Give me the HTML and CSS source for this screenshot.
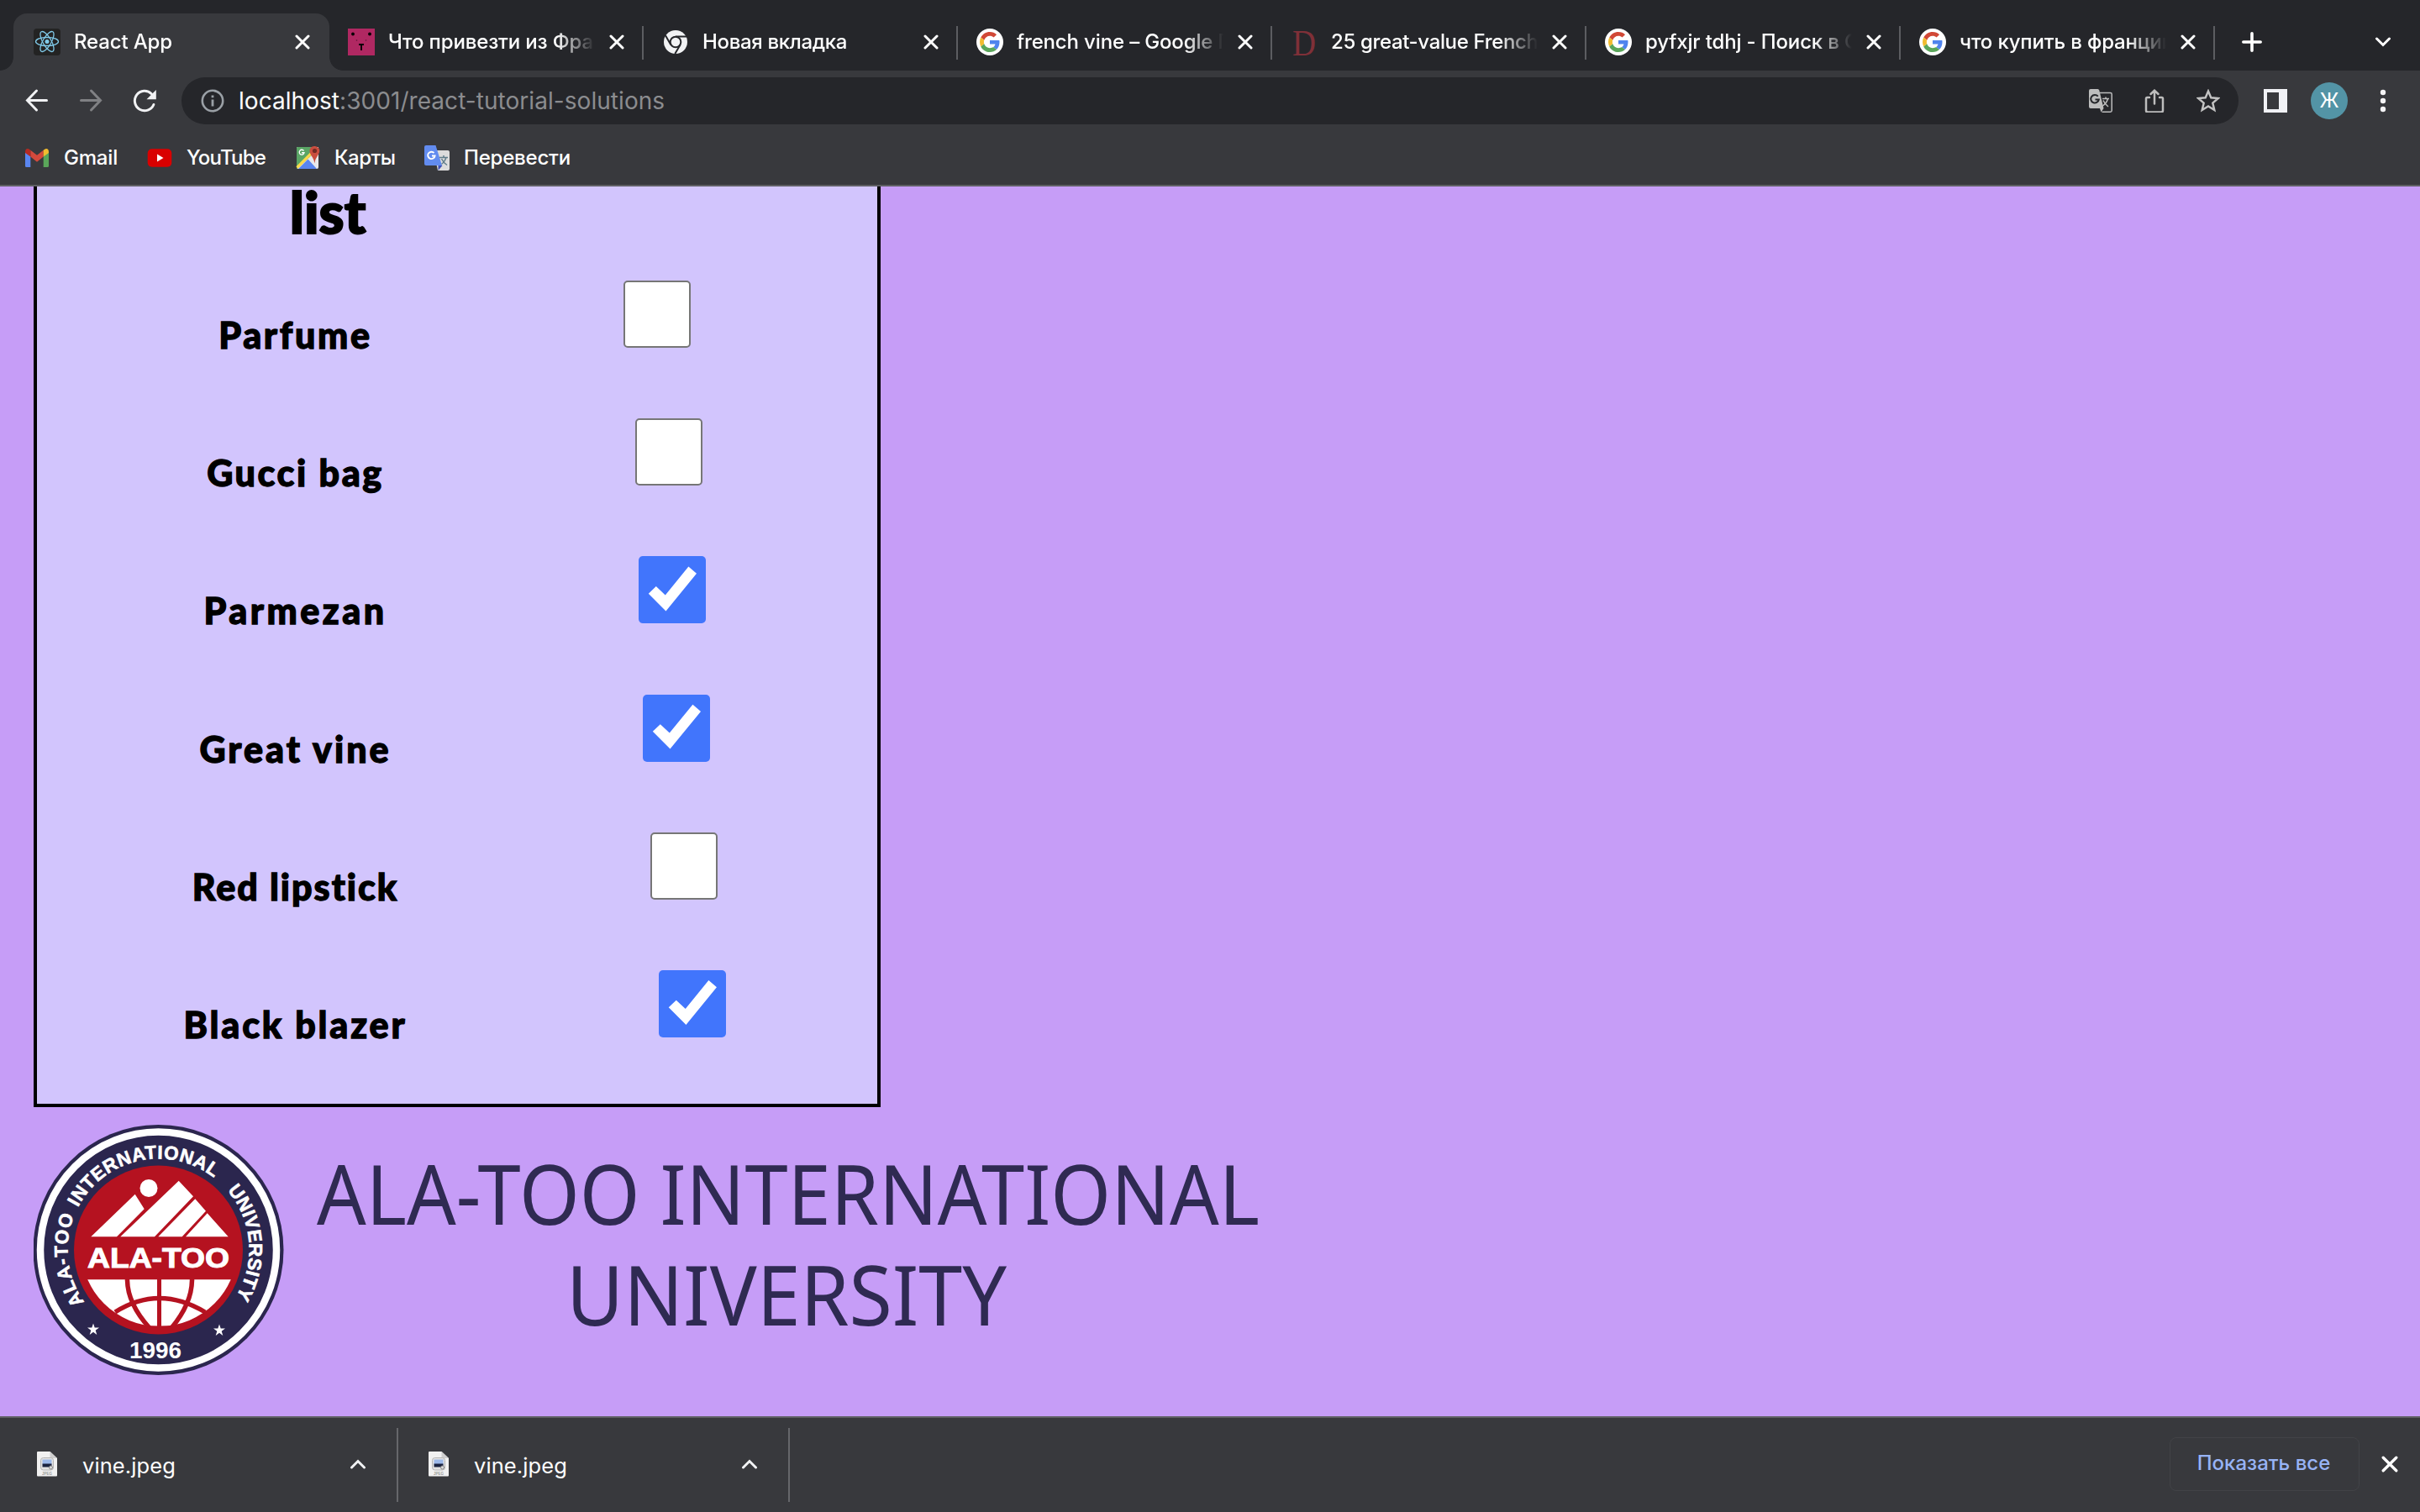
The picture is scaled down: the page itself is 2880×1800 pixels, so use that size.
FILE: index.html
```html
<!DOCTYPE html>
<html lang="ru">
<head>
<meta charset="utf-8">
<title>React App</title>
<link rel="stylesheet" href="styles.css">
</head>
<body>
<svg class="defs" width="0" height="0" aria-hidden="true">
  <symbol id="close" viewBox="0 0 18 18"><path d="M2 2 16 16M16 2 2 16" fill="none" stroke="currentColor" stroke-width="3" stroke-linecap="round"/></symbol>
  <symbol id="google" viewBox="0 0 32 32">
    <circle cx="16" cy="16" r="16" fill="#fff"/>
    <g transform="translate(4 4) scale(.5)">
      <path fill="#d14836" d="M24 9.5c3.54 0 6.71 1.22 9.21 3.6l6.85-6.85C35.9 2.38 30.47 0 24 0 14.62 0 6.51 5.38 2.56 13.22l7.98 6.19C12.43 13.72 17.74 9.5 24 9.5z"/>
      <path fill="#5084ee" d="M46.98 24.55c0-1.57-.15-3.09-.38-4.55H24v9.02h12.94c-.58 2.96-2.26 5.48-4.78 7.18l7.73 6c4.51-4.18 7.09-10.36 7.09-17.65z"/>
      <path fill="#f2bc2f" d="M10.53 28.59c-.48-1.45-.76-2.99-.76-4.59s.27-3.14.76-4.59l-7.98-6.19C.92 16.46 0 20.12 0 24c0 3.88.92 7.54 2.56 10.78l7.97-6.19z"/>
      <path fill="#5aa65a" d="M24 48c6.48 0 11.93-2.13 15.89-5.81l-7.73-6c-2.15 1.45-4.92 2.3-8.16 2.3-6.26 0-11.57-4.22-13.47-9.91l-7.98 6.19C6.51 42.62 14.62 48 24 48z"/>
    </g>
  </symbol>
  <symbol id="jpeg" viewBox="0 0 24 30">
    <path d="M1 0H15.500L24 8V28.500Q24 29.500 23 29.500H1Q0 29.500 0 28.500V1Q0 0 1 0Z" fill="#f1f1f1"/>
    <path d="M15.500 0 24 8H17Q15.500 8 15.500 6.500Z" fill="#cfcfcf"/>
    <rect x="4.500" y="7.500" width="15" height="14.500" rx="3" fill="#e3e3e3" stroke="#b5b5b5" stroke-width="1"/>
    <rect x="6.500" y="9.500" width="11" height="6" fill="#9db9ea"/>
    <path d="M6.500 14.500H17.500V18.500H6.500Z" fill="#1a2340"/>
    <circle cx="16.500" cy="19" r="2" fill="#ddd" stroke="#888"/>
    <text x="12" y="27.500" text-anchor="middle" class="jpeg-tag">JPEG</text>
  </symbol>
</svg>

<header class="browser">
  <div class="tabs">
    <div class="tab tab-active">
      <svg class="favicon" viewBox="0 0 32 32"><rect width="32" height="32" rx="4" fill="#232323"/><g fill="none" stroke="#80cbea" stroke-width="1.300"><ellipse cx="16" cy="15.500" rx="13.500" ry="5"/><ellipse cx="16" cy="15.500" rx="13.500" ry="5" transform="rotate(60 16 15.500)"/><ellipse cx="16" cy="15.500" rx="13.500" ry="5" transform="rotate(120 16 15.500)"/></g><circle cx="16" cy="15.500" r="2.500" fill="#80cbea"/></svg>
      <span class="tab-title">React App</span>
      <svg class="tab-close"><use href="#close"/></svg>
    </div>
    <div class="tab">
      <svg class="favicon" viewBox="0 0 32 32"><rect width="32" height="32" fill="#b02862"/><circle cx="6" cy="6.500" r="1.900"/><circle cx="26" cy="6.500" r="1.900"/><circle cx="10.500" cy="14" r=".8" fill="#5c1635"/><circle cx="21.500" cy="14" r=".8" fill="#5c1635"/><path d="M13 19H19M16 19V26" stroke="#000" stroke-width="1.800"/></svg>
      <span class="tab-title">Что привезти из Фра</span>
      <svg class="tab-close"><use href="#close"/></svg>
    </div>
    <div class="tab tab-line">
      <svg class="favicon" viewBox="0 0 32 32"><circle cx="16" cy="16" r="14" fill="#f1f2f4"/><circle cx="16" cy="16" r="6.300" fill="none" stroke="#25262a" stroke-width="2"/><path d="M16 9.500H29M10.300 19.200 4 8.200M21.600 19.200 15.300 30" stroke="#25262a" stroke-width="2" fill="none"/></svg>
      <span class="tab-title tight">Новая вкладка</span>
      <svg class="tab-close"><use href="#close"/></svg>
    </div>
    <div class="tab tab-line">
      <svg class="favicon"><use href="#google"/></svg>
      <span class="tab-title">french vine – Google П</span>
      <svg class="tab-close"><use href="#close"/></svg>
    </div>
    <div class="tab tab-line">
      <svg class="favicon" viewBox="0 0 32 32"><text x="2" y="31.500" class="letter-d" textLength="28" lengthAdjust="spacingAndGlyphs">D</text></svg>
      <span class="tab-title tight">25 great-value French</span>
      <svg class="tab-close"><use href="#close"/></svg>
    </div>
    <div class="tab tab-line">
      <svg class="favicon"><use href="#google"/></svg>
      <span class="tab-title">pyfxjr tdhj - Поиск в G</span>
      <svg class="tab-close"><use href="#close"/></svg>
    </div>
    <div class="tab tab-line tab-last">
      <svg class="favicon"><use href="#google"/></svg>
      <span class="tab-title">что купить в франции</span>
      <svg class="tab-close"><use href="#close"/></svg>
    </div>
    <svg class="new-tab" viewBox="0 0 24 24"><path d="M12 1.800V22.200M1.800 12H22.200" stroke="#fff" stroke-width="3.600" stroke-linecap="round"/></svg>
    <svg class="tab-menu" viewBox="0 0 20 12"><path d="M2.500 2 10 9.500 17.500 2" fill="none" stroke="#fff" stroke-width="3" stroke-linecap="round"/></svg>
  </div>

  <div class="toolbar">
    <svg class="nav-icon" viewBox="0 0 32 32"><path d="M27.500 15.500H5M15.500 4 4.500 15.500 15.500 27" fill="none" stroke="#f1f2f4" stroke-width="3" stroke-linecap="round"/></svg>
    <svg class="nav-icon" viewBox="0 0 32 32"><path d="M4.500 15.500H27M16.500 4 27.500 15.500 16.500 27" fill="none" stroke="#808184" stroke-width="3" stroke-linecap="round"/></svg>
    <svg class="nav-icon" viewBox="0 0 32 32"><path d="M26.900 20.500A11.700 11.700 0 1 1 24.300 7.700" fill="none" stroke="#f1f2f4" stroke-width="3" stroke-linecap="round"/><path d="M29.800 3V14.300H18.500Z" fill="#f1f2f4"/></svg>
    <div class="omnibox">
      <svg class="info" viewBox="0 0 28 28"><circle cx="14" cy="14" r="12.200" fill="none" stroke="#9aa0a6" stroke-width="2.600"/><path d="M14 12.500V20.500M14 7.500V10.300" stroke="#9aa0a6" stroke-width="2.800"/></svg>
      <span class="url">localhost<span class="url-path">:3001/react-tutorial-solutions</span></span>
      <div class="omni-icons">
        <svg class="omni-icon" viewBox="0 0 28 28"><path d="M13 4.500H25.500Q27.200 4.500 27.200 6.200V25.500Q27.200 27.200 25.500 27.200H15.500" fill="none" stroke="#bdbdbd" stroke-width="1.500"/><path d="M2 0H10.500Q11.800 0 12.300 1.500L17.500 23 14.500 27.500 13 23H2Q0 23 0 21V2Q0 0 2 0Z" fill="#bdbdbd"/><path d="M10.800 8.700A4.800 4.800 0 1 0 11.800 12.500H7.500" fill="none" stroke="#25262a" stroke-width="2"/><path d="M16 11.500H24M20 9.500V11.500M22.500 11.500Q21 17 15.800 20.500M17 13.500Q19 18 23 21" fill="none" stroke="#bdbdbd" stroke-width="1.500"/></svg>
        <svg class="omni-icon" viewBox="0 0 28 28"><path d="M8 10H5.500Q4 10 4 11.500V25.500Q4 27.500 6 27.500H22Q24 27.500 24 25.500V11.500Q24 10 22.500 10H20M14 17.500V2.500M9.500 6 14 1.700 18.500 6" fill="none" stroke="#bdbdbd" stroke-width="2.500" stroke-linecap="round"/></svg>
        <svg class="omni-icon" viewBox="0 0 28 28"><path d="M14 2.500 17.300 10.300 25.800 11 19.300 16.600 21.300 25 14 20.500 6.700 25 8.700 16.600 2.200 11 10.700 10.300Z" fill="none" stroke="#c4c4c4" stroke-width="2.400"/></svg>
      </div>
    </div>
    <svg class="side-panel" viewBox="0 0 28 28"><path fill-rule="evenodd" fill="#f1f2f6" d="M0 0H28V28H0ZM4 4V24H18V4Z"/></svg>
    <span class="avatar">Ж</span>
    <svg class="kebab" viewBox="0 0 8 28"><g fill="#f4f4f6"><circle cx="4" cy="4" r="3.200"/><circle cx="4" cy="14" r="3.200"/><circle cx="4" cy="24" r="3.200"/></g></svg>
  </div>

  <nav class="bookmarks">
    <a class="bookmark bm-gmail"><svg viewBox="0 0 32 32"><path d="M2 9V25.500Q2 27 3.500 27H8.300V14Z" fill="#5a86f0"/><path d="M30 9V25.500Q30 27 28.500 27H23.700V14Z" fill="#5aa65a"/><path d="M8.300 6.800 16 12.800 23.700 6.800V14.500L16 20.700 8.300 14.500Z" fill="#d4493c"/><path d="M2 9Q2 5 5 5 6.300 5 8.300 6.800V14.500L2 10Z" fill="#b52a22"/><path d="M30 9Q30 5 27 5 25.700 5 23.700 6.800V14.500L30 10Z" fill="#f2bc2f"/></svg>Gmail</a>
    <a class="bookmark bm-youtube"><svg viewBox="0 0 32 32"><rect x="1.700" y="5.300" width="28.600" height="21.500" rx="5" fill="#d90000"/><path d="M13 11.500V20.500L20.500 16Z" fill="#fff"/></svg>YouTube</a>
    <a class="bookmark bm-maps"><svg viewBox="0 0 32 32"><path d="M4 3H29V27Q29 29 27 29H5Q3 29 3 27V4Q3 3 4 3Z" fill="#e8e8ea"/><path d="M4 3H22L24 10 3 29V4Q3 3 4 3Z" fill="#5aa565"/><path d="M5 29 16.500 17.500 27 29Z" fill="#5a86f0"/><path d="M3.500 27.500 21 10" stroke="#fbd94b" stroke-width="3.200"/><path d="M24.300 22.500Q24 18 20 12.500 17.500 8 19 5A6.200 6.200 0 0 1 30.200 6Q31 9 28.500 12.500 25 17.500 24.300 22.500Z" fill="#c94d3f"/><circle cx="24.500" cy="7.500" r="2.600" fill="#712a24"/><path d="M11.500 7.500A2.900 2.900 0 1 0 12 9.700H9" fill="none" stroke="#fff" stroke-width="1.400"/></svg>Карты</a>
    <a class="bookmark bm-translate"><svg viewBox="0 0 32 32"><path d="M12 7H29Q31 7 31 9V29Q31 31 29 31H17Z" fill="#dcdcdc"/><path d="M17.500 31V25H22.500Z" fill="#3f51b5"/><path d="M3 1H14.500L22 25H3Q1 25 1 23V3Q1 1 3 1Z" fill="#628cf0"/><path d="M12.500 10A4.200 4.200 0 1 0 13.600 13.500H10" fill="none" stroke="#fff" stroke-width="1.900"/><path d="M19 15.500H29M24 13V15.500M27 15.500Q25.500 20.500 21.500 23.500M21.500 17Q23.500 21.500 28 24.500" fill="none" stroke="#607d8b" stroke-width="1.500"/></svg>Перевести</a>
  </nav>
</header>

<main class="page">
  <section class="card">
    <h2 class="card-title">list</h2>
    <ul class="items">
      <li class="item"><label class="item-label parfume">Parfume</label><input class="check" type="checkbox"></li>
      <li class="item"><label class="item-label gucci">Gucci bag</label><input class="check" type="checkbox"></li>
      <li class="item"><label class="item-label parmezan">Parmezan</label><input class="check" type="checkbox" checked></li>
      <li class="item"><label class="item-label vine">Great vine</label><input class="check" type="checkbox" checked></li>
      <li class="item"><label class="item-label lipstick">Red lipstick</label><input class="check" type="checkbox"></li>
      <li class="item"><label class="item-label blazer">Black blazer</label><input class="check" type="checkbox" checked></li>
    </ul>
  </section>
  <svg class="logo" viewBox="0 0 1480 300" role="img" aria-label="Ala-Too International University">
    <defs><path id="ring" d="M60.500 212.100A108 108 0 1 1 240.600 205.900"/><clipPath id="globe"><path d="M60 185.300H240V240.500H60Z"/></clipPath></defs>
    <circle cx="148.500" cy="150" r="149" fill="#2b264e"/>
    <circle cx="148.500" cy="150" r="140.500" fill="none" stroke="#fff" stroke-width="8.500"/>
    <circle cx="148.500" cy="150" r="100.500" fill="#b51220"/>
    <g class="seal-ring">
      <text><textPath href="#ring" startOffset="0" textLength="108">ALA-TOO</textPath></text>
      <text><textPath href="#ring" startOffset="118.600" textLength="188.500">INTERNATIONAL</textPath></text>
      <text><textPath href="#ring" startOffset="328.700" textLength="136">UNIVERSITY</textPath></text>
    </g>
    <g fill="#fff">
      <circle cx="137" cy="76.500" r="10.500"/>
      <path d="M68.300 134.300 120.700 83.700 131.700 101.300 99 134.300ZM103.300 134.300 172.700 67.700 190 86.300 144 134.300ZM148.300 134.300 192.300 89.300 205 103.700 176.700 134.300ZM181 134.300 206.700 106.300 231.700 134.300Z"/>
      <circle cx="149.500" cy="148" r="93" clip-path="url(#globe)"/>
      <path id="star" d="M71 237.500 72.700 242.600H78L73.700 245.800 75.300 251 71 247.800 66.700 251 68.300 245.800 64 242.600H69.300Z"/>
      <use href="#star" x="150" y="1"/>
    </g>
    <g fill="none" stroke="#b51220" stroke-width="5.500">
      <path d="M149.500 184V242" stroke-width="5"/>
      <path d="M111.500 184Q111 213 138 243M188.500 184Q189 213 164 243M97 224Q149 191 204 224"/>
    </g>
    <text x="64" y="171.300" class="seal-name" textLength="169" lengthAdjust="spacingAndGlyphs">ALA-TOO</text>
    <text x="114" y="279" class="seal-year" textLength="62" lengthAdjust="spacingAndGlyphs">1996</text>
    <text x="337" y="120" class="logo-text" textLength="1122" lengthAdjust="spacingAndGlyphs">ALA-TOO INTERNATIONAL</text>
    <text x="634" y="240" class="logo-text" textLength="524" lengthAdjust="spacingAndGlyphs">UNIVERSITY</text>
  </svg>
</main>

<footer class="downloads">
  <div class="download"><svg class="file-icon"><use href="#jpeg"/></svg><span class="file-name">vine.jpeg</span><svg class="file-menu" viewBox="0 0 20 12"><path d="M2.500 10 10 2.500 17.500 10" fill="none" stroke="#f1f2f4" stroke-width="3" stroke-linecap="round"/></svg></div>
  <div class="download"><svg class="file-icon"><use href="#jpeg"/></svg><span class="file-name">vine.jpeg</span><svg class="file-menu" viewBox="0 0 20 12"><path d="M2.500 10 10 2.500 17.500 10" fill="none" stroke="#f1f2f4" stroke-width="3" stroke-linecap="round"/></svg></div>
  <button class="show-all">Показать все</button>
  <svg class="shelf-close"><use href="#close"/></svg>
</footer>
</body>
</html>
```

FILE: styles.css
```css
* { box-sizing: border-box; }

body {
  margin: 0;
  width: 2880px;
  height: 1800px;
  overflow: hidden;
  display: flex;
  flex-direction: column;
  background: #c69df7;
  font-family: Inter, Roboto, sans-serif;
  color: #fff;
}

svg { display: block; flex: none; }
.defs { position: absolute; }
.jpeg-tag { font: bold 4.500px "Liberation Sans", sans-serif; fill: #999; }

/* Browser chrome */
.browser {
  flex: none;
  height: 222px;
  background: #38393d;
  border-bottom: 2px solid #5f6064;
}

.tabs {
  display: flex;
  align-items: flex-end;
  height: 84px;
  padding-left: 16px;
  background: #25262a;
}

.tab {
  position: relative;
  display: flex;
  align-items: center;
  flex: none;
  width: 374px;
  height: 68px;
  padding-left: 24px;
}

.tab-active {
  width: 376px;
  margin-right: -2px;
  border-radius: 16px 16px 0 0;
  background: #38393d;
}

.tab-active::before,
.tab-active::after {
  content: "";
  position: absolute;
  bottom: 0;
  width: 16px;
  height: 16px;
}
.tab-active::before { left: -16px; background: radial-gradient(circle at 0 0, transparent 15.500px, #38393d 16.200px); }
.tab-active::after { right: -16px; background: radial-gradient(circle at 100% 0, transparent 15.500px, #38393d 16.200px); }

.tab-line::before,
.tab-last::after {
  content: "";
  position: absolute;
  left: 0;
  top: 15px;
  width: 2px;
  height: 40px;
  background: #5c5d61;
}
.tab-last::after { left: auto; right: -2px; }

.favicon { width: 32px; height: 32px; }
.letter-d { font: 45px "Liberation Serif", serif; fill: #7f3038; }

.tab-title {
  width: 248px;
  margin: 0 15px 0 16px;
  overflow: hidden;
  white-space: nowrap;
  font-size: 24px;
  line-height: 34px;
  font-weight: 500;
  letter-spacing: -.15px;
  -webkit-mask-image: linear-gradient(to right, #000 200px, transparent 246px);
  mask-image: linear-gradient(to right, #000 200px, transparent 246px);
}
.tight { letter-spacing: -.35px; }
.tab-close { width: 18px; height: 18px; }
.new-tab { width: 24px; height: 24px; margin: 0 0 22px 34px; }
.tab-menu { width: 20px; height: 12px; margin: 0 34px 28px auto; }

.toolbar {
  display: flex;
  align-items: center;
  height: 72px;
  padding-left: 28px;
}
.nav-icon { width: 32px; height: 32px; margin-right: 32px; }

.omnibox {
  display: flex;
  align-items: center;
  width: 2448px;
  height: 56px;
  margin-left: -4px;
  padding: 0 22px 0 23px;
  border-radius: 28px;
  background: #25262a;
}
.info { width: 28px; height: 28px; }
.url { margin-left: 17px; font-size: 28px; line-height: 40px; letter-spacing: .05px; }
.url-path { color: #8b8c8f; }
.omni-icons { display: flex; gap: 36px; margin-left: auto; }
.omni-icon { width: 28px; height: 28px; }
.side-panel { width: 28px; height: 28px; margin-left: 30px; }
.avatar {
  width: 44px;
  height: 44px;
  margin-left: 28px;
  border-radius: 50%;
  background: #5394a6;
  font-size: 24px;
  line-height: 44px;
  text-align: center;
}
.kebab { width: 8px; height: 28px; margin-left: 38px; }

.bookmarks {
  display: flex;
  align-items: center;
  height: 64px;
  padding-left: 28px;
  font-size: 24px;
  line-height: 34px;
  font-weight: 500;
  letter-spacing: -.2px;
}
.bookmark { display: flex; align-items: center; flex: none; }
.bookmark svg { width: 32px; height: 32px; margin-right: 16px; }
.bm-gmail { width: 146px; }
.bm-youtube { width: 176px; letter-spacing: -.8px; }
.bm-maps { width: 154px; letter-spacing: -.5px; }

/* Page */
.page { flex: 1; min-height: 0; padding-left: 40px; }

.card {
  width: 1008px;
  height: 1096px;
  border: 4px solid #000;
  border-top: 0;
  background: #d2c5fd;
  color: #000;
  font-family: Lato, "Open Sans", sans-serif;
  font-weight: 900;
  -webkit-text-stroke: 1.300px #000;
}
.card-title {
  width: 692px;
  margin: 0;
  font-size: 68px;
  line-height: 60px;
  font-weight: 900;
  text-align: center;
  -webkit-text-stroke-width: 2px;
}
.items {
  display: grid;
  grid-auto-rows: 164.200px;
  width: 614px;
  margin: 52px 0 0;
  padding: 0;
  list-style: none;
}
.item { display: flex; justify-content: center; }
.item-label {
  flex: none;
  padding: 38px 0 0 1px;
  font-size: 43px;
  line-height: 54px;
  white-space: nowrap;
}
.parfume { letter-spacing: 2.700px; }
.gucci { letter-spacing: 2.600px; }
.parmezan { letter-spacing: 3.500px; }
.vine { letter-spacing: 3px; }
.lipstick { letter-spacing: 2px; }
.blazer { letter-spacing: 2.850px; }

.check {
  flex: none;
  appearance: none;
  width: 80px;
  height: 80px;
  margin: 0 -379.500px 0 299.500px;
  border: 2px solid #767676;
  border-radius: 5px;
  background: #fff;
}
.check:checked { border: 0; background: #4175fc; }
.check:checked::before {
  content: "";
  display: block;
  width: 80px;
  height: 80px;
  background: #fff;
  clip-path: polygon(11.700px 44.300px, 20.700px 35.700px, 31.700px 46px, 59.300px 12.100px, 68.900px 20.400px, 32.400px 65px);
}

.logo { width: 1480px; height: 300px; margin-top: 20px; }
.seal-ring { font: bold 22.500px "Liberation Sans", sans-serif; fill: #fff; stroke: #fff; stroke-width: .6px; }
.seal-name { font: bold 34px "Liberation Sans", sans-serif; fill: #fff; stroke: #fff; stroke-width: 1px; }
.seal-year { font: bold 28px "Liberation Sans", sans-serif; fill: #fff; }
.logo-text { font: 98px "Noto Sans", sans-serif; fill: #2f2a52; }

/* Download shelf */
.downloads {
  display: flex;
  align-items: center;
  flex: none;
  height: 114px;
  border-top: 2px solid #5f6064;
  background: #38393d;
}
.download {
  display: flex;
  align-items: center;
  width: 466px;
  height: 88px;
  padding: 0 36px 0 36px;
  border-right: 2px solid #66676b;
}
.download:first-child { width: 474px; padding-left: 44px; }
.file-icon { width: 24px; height: 30px; margin-bottom: 3px; }
.file-name { margin-left: 30px; padding-top: 2px; font-size: 25.500px; line-height: 34px; letter-spacing: .1px; }
.file-menu { width: 20px; height: 12px; margin: 0 0 2px auto; }
.show-all {
  width: 226px;
  height: 64px;
  margin: 0 26px 2px auto;
  padding: 0 2px 2px 0;
  border: 1px solid #424347;
  border-radius: 8px;
  background: none;
  color: #97b3f5;
  font: 500 24px/34px Inter, sans-serif;
}
.shelf-close { width: 20px; height: 20px; margin: 0 26px 2px 0; }
```
